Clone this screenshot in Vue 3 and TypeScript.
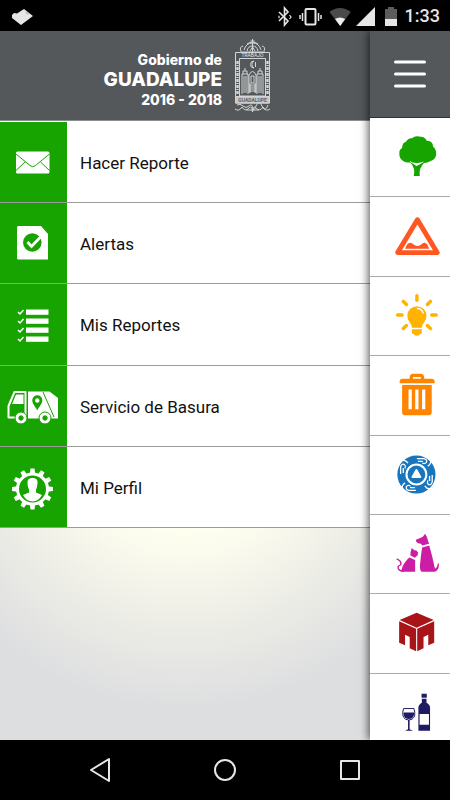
<script setup lang="ts">
const gearTeeth: number[] = Array.from({ length: 12 }, (_, i) => i * 30)
const quarters: number[] = [0, 90, 180, 270]
const sun: number[] = [0, 45, 90, 135, 225, 270, 315]
const checks: number[] = [28, 37, 46, 55]
</script>

<template>
  <div class="screen">
    <div class="status">
      <svg class="notice" width="24" height="30" viewBox="0 0 24 30" aria-hidden="true">
        <path d="M2 14 4 12 7 12.500 14 8 23 15 11 24 2 17Z" fill="#e6e6e6" />
        <path d="M15 10 19 13 17 13.500Z" fill="#aaa" />
      </svg>
      <svg width="21" height="30" viewBox="0 0 21 30" aria-hidden="true">
        <path d="M5 11 14 20 10.500 24V7L14 11 5 20" fill="none" stroke="#e6e6e6" stroke-width="1.600" />
        <path d="M15.500 14 17 16 15.500 18M5 14.800V17.200" fill="none" stroke="#e6e6e6" stroke-width="1.200" />
      </svg>
      <svg width="31" height="30" viewBox="0 0 31 30" aria-hidden="true">
        <rect x="10.500" y="8" width="10" height="15.500" rx="1" fill="none" stroke="#e6e6e6" stroke-width="2" />
        <path d="M7.500 12V20M5 14V18M23.500 12V20M26 14V18" stroke="#e6e6e6" stroke-width="1.500" />
      </svg>
      <svg width="27" height="30" viewBox="0 0 27 30" aria-hidden="true">
        <path d="M3.500 11Q14 3 24.800 11L14.200 25Z" fill="#4a4a4a" />
        <path d="M9 18Q14 15 19.200 18L14.200 25Z" fill="#eee" />
      </svg>
      <svg width="26" height="30" viewBox="0 0 26 30" aria-hidden="true">
        <path d="M22 6V25H3Z" fill="#e6e6e6" />
      </svg>
      <svg width="26" height="30" viewBox="0 0 26 30" aria-hidden="true">
        <path d="M6 8H9V6H15V8H18V18H6Z" fill="#5c5c5c" />
        <path d="M6 18H18V25H6Z" fill="#e6e6e6" />
      </svg>
      <time class="clock">1:33</time>
    </div>

    <div class="app">
      <main class="panel">
        <header class="brand">
          <h1 class="title">
            <span>Gobierno de</span>
            <span class="big">GUADALUPE</span>
            <span>2016 - 2018</span>
          </h1>
          <svg class="crest" width="37" height="74" viewBox="0 0 37 74" fill="none" stroke="#d3d5d6" stroke-width="1">
            <path d="M18.500 0V13M16.500 2H20.500M13 5Q18.500 1 24 5M10 11Q12 4 18.500 4T27 11M7 12Q5 8 9 7M30 12Q32 8 28 7M13 12Q14 7 18.500 7T24 12M16 12 18.500 8 21 12M6 13H31" />
            <path d="M1.500 13.500H35.500V64H1.500Z" />
            <path d="M5.500 19.500H31.500V57H5.500Z" />
            <path d="M3.500 22V55M33.500 22V55" stroke-width="2.400" stroke-dasharray="3 1 1 1" />
            <text x="18.500" y="18.300" font-size="5" text-anchor="middle" fill="#e3e4e5" stroke="none">TRABAJO</text>
            <path d="M20 22A3.500 3.500 0 1 0 20 29A4 4 0 0 1 20 22M21.500 23V28" />
            <path d="M8 55V35H14V55M23 55V35H29V55M9 35V32H13V35M24 35V32H28V35M11 32V29M26 32V29M10 37V54M12 37V54M25 37V54M27 37V54" />
            <path d="M15 54V36Q18.500 29 22 36V54M17 37H20V44H17ZM15 46H22M15 48H22M15 50H22M15 52H22M16 44V54M21 44V54" />
            <path d="M1.500 57.500H35.500V64H1.500Z" fill="#c4c6c8" />
            <text x="18.500" y="62.500" font-size="5" font-weight="bold" text-anchor="middle" fill="#606466" stroke="none">GUADALUPE</text>
            <path d="M3 66Q6 64 9 67T15 67 18.500 69 22 67 28 67 34 66M1 70Q5 73 8 68 11 73 15 69 18 66 18.500 73 19 66 22 69 26 73 29 68 32 73 36 70M12 71H25" />
          </svg>
        </header>

        <nav class="menu" aria-label="Principal">
          <a class="row" href="#reporte">
            <span class="tile">
              <svg viewBox="0 0 67 80" aria-hidden="true">
                <rect x="16" y="29.500" width="33.500" height="22" rx="1.500" fill="#fff" />
                <path d="M16 32 30 43.500Q32.700 46 35.500 43.500L49.500 32M16 48.500 25 40M49.500 48.500 40.500 40" fill="none" stroke="#17a300" />
              </svg>
            </span>
            <span class="label">Hacer Reporte</span>
          </a>
          <a class="row" href="#alertas">
            <span class="tile">
              <svg viewBox="0 0 67 80" aria-hidden="true">
                <path d="M17 24.500Q17 23 18.500 23H41L48 31V56.500H18.500Q17 56.500 17 55Z" fill="#fff" />
                <circle cx="32.300" cy="39.500" r="9.300" fill="#17a300" />
                <path d="M27.500 39 31.500 43.500 41 33.500" fill="none" stroke="#fff" stroke-width="2.800" />
              </svg>
            </span>
            <span class="label">Alertas</span>
          </a>
          <a class="row" href="#mis-reportes">
            <span class="tile">
              <svg viewBox="0 0 67 80" aria-hidden="true">
                <g v-for="y in checks" :key="y">
                  <rect x="26" :y="y - 2.500" width="22.500" height="5.300" fill="#fff" />
                  <path :d="`M18 ${y}L20 ${y + 2} 23.500 ${y - 2}`" fill="none" stroke="#fff" stroke-width="1.500" />
                </g>
              </svg>
            </span>
            <span class="label">Mis Reportes</span>
          </a>
          <a class="row" href="#basura">
            <span class="tile">
              <svg viewBox="0 0 67 80" aria-hidden="true">
                <path d="M8.500 51.500V40L14.500 26H25.500V51.500Z" fill="none" stroke="#fff" stroke-width="2" stroke-linejoin="round" />
                <path d="M12 38 16 28.500H23.500V38Z" fill="#fff" />
                <path d="M28 25.500H49.500L58 32V52.500H28Z" fill="#fff" />
                <path d="M43 26 54 51" stroke="#17a300" fill="none" />
                <path d="M37.300 44.500C35 40 32.300 38 32.300 34.300A5 5 0 0 1 42.300 34.300C42.300 38 39.500 40 37.300 44.500Z" fill="#17a300" />
                <circle cx="37.300" cy="34.500" r="2.200" fill="#fff" />
                <g fill="#fff" stroke="#17a300">
                  <circle cx="21" cy="52" r="6" /><circle cx="45" cy="52" r="6" />
                  <circle cx="21" cy="52" r="2.200" fill="#17a300" /><circle cx="45" cy="52" r="2.200" fill="#17a300" />
                </g>
              </svg>
            </span>
            <span class="label">Servicio de Basura</span>
          </a>
          <a class="row" href="#perfil">
            <span class="tile">
              <svg viewBox="0 0 67 80" aria-hidden="true">
                <path v-for="a in gearTeeth" :key="a" d="M29.800 27 30.500 21.500H34.500L35.200 27Z" fill="#fff" :transform="`rotate(${a} 32.500 42)`" />
                <circle cx="32.500" cy="42" r="15" fill="none" stroke="#fff" stroke-width="3" />
                <path d="M27.500 36Q27 31 32.500 31T37.500 36 36 42.500V45.500L42 48Q38.500 54.500 32.500 54.500T23 48L29 45.500V42.500Q27.500 40 27.500 36Z" fill="#fff" />
              </svg>
            </span>
            <span class="label">Mi Perfil</span>
          </a>
        </nav>
        <div class="backdrop"></div>
      </main>

      <aside class="side">
        <button class="burger" type="button" aria-label="Menú">
          <svg width="32" height="30" viewBox="0 0 32 30">
            <path d="M1.500 3H30.500M1.500 15H30.500M1.500 27H30.500" stroke="#fff" stroke-width="3" stroke-linecap="round" />
          </svg>
        </button>
        <div class="shortcuts">
          <button type="button" class="short" aria-label="Parques">
            <svg viewBox="0 0 80 79" fill="#17a300">
              <path d="M36 24Q38 20 42 20.500 45 17.500 51 19 55 19 57 23 63 23 63.500 29 67 32 66.500 37 66 42 61 43.500 56 46.500 50 45 46 46.500 42 44.500 37 46 33 43.500 29 41 29.200 36 29 32 32 30.500 32 25 36 24Z" />
              <path d="M43.800 58.700Q46 51 40 44.500L42 43.500Q45 48 47 48T53 44L55 44.500Q48.500 51 49.900 58.700Z" />
              <path d="M40 44 46.500 48 53.500 44.500" fill="none" stroke="#fff" stroke-width=".9" />
            </svg>
          </button>
          <button type="button" class="short" aria-label="Baches">
            <svg viewBox="0 0 80 79">
              <path d="M47.500 22 67.500 55.300H27.500Z" fill="none" stroke="#ff5722" stroke-width="5" stroke-linejoin="round" />
              <path d="M35 51.300 37 47Q40 44 43 46.500 47.500 50.500 52 46.500 55 44 57.500 47L59.500 51.300Z" fill="#ff5722" />
            </svg>
          </button>
          <button type="button" class="short" aria-label="Alumbrado">
            <svg viewBox="0 0 80 79">
              <g fill="#ffb300">
                <path d="M42 51.500Q42 48.500 39.500 45.500A9.700 9.700 0 1 1 54.500 45.500Q52 48.500 52 51.500Z" />
                <path d="M42 53H52V57L50 58Q50 59.500 47 59.500T44 58L42 57Z" />
              </g>
              <path d="M47 32Q52 32 53.500 37" fill="none" stroke="#fff" stroke-width="1.500" />
              <path v-for="a in sun" :key="a" d="M47 19V23.500" stroke="#ffb300" stroke-width="3.500" stroke-linecap="round" :transform="`rotate(${a} 47 38.500)`" />
            </svg>
          </button>
          <button type="button" class="short" aria-label="Basura">
            <svg viewBox="0 0 80 79" fill="#ff8400">
              <path d="M29.500 27.700V26Q29.500 23 32.500 23H39.500Q39.500 18 43 18H51Q54.500 18 54.500 23H61.500Q65 23 65 26V27.700ZM43 23H51V21.300H43Z" fill-rule="evenodd" />
              <path d="M32 29.300H62V57Q62 60 59 60H35Q32 60 32 57ZM38.500 34V54H41.800V34ZM45.300 34V54H48.600V34ZM52.200 34V54H55.500V34Z" fill-rule="evenodd" />
            </svg>
          </button>
          <button type="button" class="short" aria-label="Seguridad">
            <svg viewBox="0 0 80 79">
              <circle cx="46.500" cy="39" r="15.200" fill="none" stroke="#1976bd" stroke-width="8.200" />
              <circle cx="46.500" cy="39" r="9" fill="#1976bd" />
              <path d="M46.500 34.500 50.500 41.500H42.500Z" fill="#fff" stroke="#fff" stroke-width="2" stroke-linejoin="round" />
              <g v-for="a in quarters" :key="a" :transform="`rotate(${a} 46.500 39)`" fill="none" stroke="#fff" stroke-width="1.300">
                <path d="M47 23H54Q58 24 56.500 27 55 28.500 52.500 27.500M48 25.700H53M60.500 24Q62 28 58 30.500" />
              </g>
            </svg>
          </button>
          <button type="button" class="short" aria-label="Mascotas">
            <svg viewBox="0 0 80 79" fill="#cc1ea5">
              <path d="M46 25Q50 23.500 53 22L55.300 19 57 22 59.300 29 52.500 31 51 29Q48 29 46.300 27Z" />
              <path d="M52.300 32.800 59.500 31 62.500 42 65.300 54.500Q68 53 68.200 49H69.300Q69.500 56 65 57.500H52Q50 57 50 52L51 42Z" />
              <path d="M40.500 38 41.700 33.300 44.500 35.700 46.500 36 48.200 38 47.700 40.700 45 43.300 40.500 41Z" />
              <path d="M39.500 43 45.200 45.500V57.500H31Q32 51 36 46.500Q38 44 39.500 43Z" />
              <path d="M34 56.700Q27.500 57 28 52.500 28.500 51 30.500 50.500 32 47 26.500 44.500" fill="none" stroke="#cc1ea5" stroke-width="1.500" />
            </svg>
          </button>
          <button type="button" class="short" aria-label="Edificios">
            <svg viewBox="0 0 80 79" fill="#a81418">
              <path d="M46.700 19 64 26.300 46.700 34.300 29.500 26.300Z" />
              <path d="M29 27.500 46.200 35.300V58L39.700 55V43.500L35 41.300V52L29 49.300Z" />
              <path d="M64.500 27.500 47.300 35.300V58L53.700 55V43.500L58.500 41.300V52L64.500 49.300Z" />
            </svg>
          </button>
          <button type="button" class="short" aria-label="Alcoholes">
            <svg viewBox="0 0 80 79" fill="#1f1b62">
              <path d="M33.500 35H44Q46.500 43 42 45.800 38.700 47.500 35.500 45.800 31 43 33.500 35Z" fill="#fff" stroke="#1f1b62" />
              <path d="M33.500 39H44.200Q44.500 43 41.500 45 38.700 46 36 45 33 43 33.500 39Z" />
              <path d="M38 46.500H39.600V56L43 57.500H35L38 56Z" />
              <path d="M51.700 20H57V24H51.700Z" />
              <path d="M52 25H56.700V29Q60.300 31 60.300 34V57.500H48.500V34Q48.500 31 52 29ZM49.700 40.500V51.500H59.200V40.500Z" fill-rule="evenodd" />
            </svg>
          </button>
        </div>
      </aside>
    </div>

    <footer class="system">
      <button type="button" aria-label="Atrás">
        <svg width="24" height="28" viewBox="0 0 24 28"><path d="M21 3V25L3 14Z" /></svg>
      </button>
      <button type="button" aria-label="Inicio">
        <svg width="24" height="28" viewBox="0 0 24 28"><circle cx="12" cy="14" r="10" /></svg>
      </button>
      <button type="button" aria-label="Recientes">
        <svg width="24" height="28" viewBox="0 0 24 28"><rect x="3" y="5" width="18" height="18" /></svg>
      </button>
    </footer>
  </div>
</template>

<style>
body {
  background: #000;
}
</style>

<style scoped>
.screen {
  display: flex;
  flex-direction: column;
  height: 100vh;
  font-family: Roboto, sans-serif;
}
svg {
  display: block;
}
button {
  padding: 0;
  border: 0;
  background: none;
}
.status {
  display: flex;
  align-items: center;
  height: 31px;
  padding: 0 10px;
  background: #000;
}
.notice {
  margin-right: auto;
}
.clock {
  color: #e6e6e6;
  font: 500 18px/30px Roboto, sans-serif;
}
.app {
  display: grid;
  grid-template-columns: 1fr 80px;
  flex: 1;
  min-height: 0;
  overflow: hidden;
}
.panel {
  display: flex;
  flex-direction: column;
}
.brand {
  display: flex;
  justify-content: flex-end;
  align-items: center;
  gap: 12px;
  box-sizing: border-box;
  height: 90px;
  padding-right: 99px;
  border-bottom: 1px solid #8b8d90;
  background: #55585b;
}
.title {
  display: flex;
  flex-direction: column;
  margin: 0;
  padding-top: 8px;
  color: #fff;
  font: 800 14px/18px Inter, sans-serif;
  text-align: right;
}
.big {
  font-size: 19px;
  line-height: 22px;
}
.menu {
  display: grid;
  grid-template-rows: repeat(5, 1fr);
  box-sizing: border-box;
  height: 407px;
  padding-top: 1px;
  background: #fff;
}
.row {
  display: flex;
  border-bottom: 1px solid #9b9b9b;
  color: #111;
  text-decoration: none;
}
.tile {
  width: 67px;
  background: #17a300;
}
.tile svg {
  width: 67px;
  height: 80px;
}
.label {
  align-self: center;
  padding-top: 2px;
  padding-left: 13px;
  font-size: 17px;
  line-height: 24px;
}
.backdrop {
  flex: 1;
  background: radial-gradient(circle at 50% -98px, #fffff0 100px, #ecece6 200px, #dddee0 280px);
}
.side {
  position: relative;
  min-height: 0;
  background: #fff;
  box-shadow: -2px 0 8px rgba(0, 0, 0, 0.6);
}
.burger {
  display: flex;
  justify-content: center;
  align-items: center;
  box-sizing: border-box;
  width: 100%;
  height: 87px;
  border-bottom: 1px solid #333;
  background: #55585b;
}
.shortcuts {
  display: grid;
  grid-template-rows: repeat(8, 1fr);
  height: 635px;
}
.short {
  border-bottom: 1px solid #aaa;
}
.short svg {
  width: 80px;
  height: 78px;
}
.system {
  display: grid;
  grid-template-columns: repeat(3, 1fr);
  height: 60px;
  padding: 0 38px;
  background: #000;
}
.system button {
  display: flex;
  justify-content: center;
  align-items: center;
}
.system svg {
  fill: none;
  stroke: #e6e6e6;
  stroke-width: 2;
  stroke-linejoin: round;
}
</style>
